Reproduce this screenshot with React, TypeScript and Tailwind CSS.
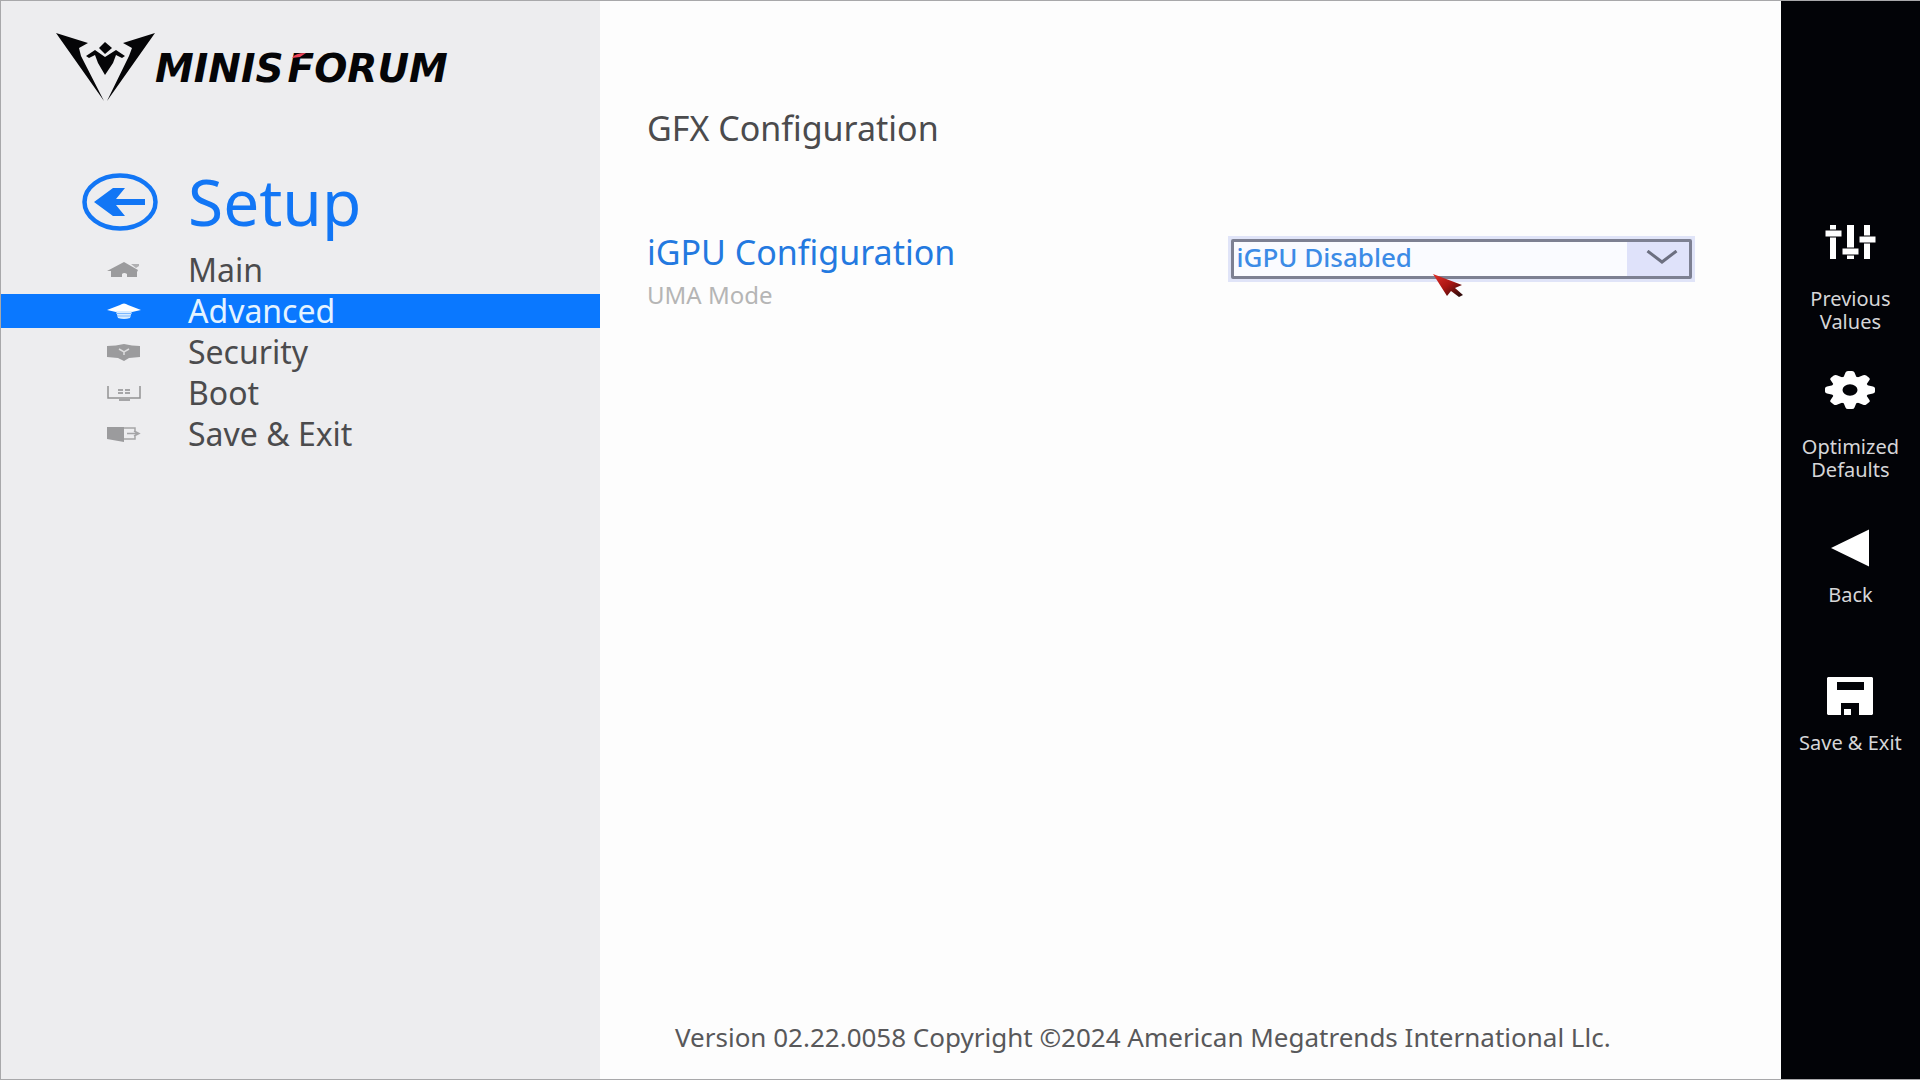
import React from "react";

function Emblem() {
  return (
    <svg viewBox="0 0 99 68" className="h-[68px] w-[99px] shrink-0" aria-hidden="true">
      <path d="M0 0 L32 10 L23 15 L25 23 L48 68 Z" fill="#050507" />
      <path d="M99 0 L67 10 L76 15 L73 23 L51 68 Z" fill="#050507" />
      <path d="M49 9 L56 15 L49 21 L43 15 Z" fill="#050507" />
      <path d="M30 23 L39 17 L49 24 L60 17 L69 23 L66 25 L60 22 L57 30 L49 42 L42 30 L39 22 L33 25 Z" fill="#050507" />
    </svg>
  );
}

function BackCircle() {
  return (
    <svg viewBox="0 0 76 58" className="h-[58px] w-[76px]" aria-hidden="true">
      <ellipse cx="38" cy="29" rx="35.5" ry="26.5" fill="none" stroke="#1276f5" strokeWidth="4.5" />
      <path d="M12 29 L31 15 H43 L34 26 H63 V32 H34 L43 43 H31 Z" fill="#1276f5" />
    </svg>
  );
}

function HomeIcon() {
  return (
    <svg viewBox="0 0 34 18" className="h-[18px] w-[34px]" aria-hidden="true">
      <path d="M0 10 L17 1 L31 9 L30 11 V16 H20 V13 Q17 11 15 13 V16 H4 V10 Z" fill="#9b9b9d" />
      <path d="M24 3 H32 V5 L29 7 Z" fill="#b0b0b2" />
    </svg>
  );
}

function CapIcon() {
  return (
    <svg viewBox="0 0 34 18" className="h-[18px] w-[34px]" aria-hidden="true">
      <path d="M0 8 L13 3 Q17 0 21 3 L34 8 L25 10 H9 Z" fill="#fff" />
      <path d="M9 9 H25 L23 16 Q17 18 11 16 Z" fill="#d8ecff" />
      <path d="M9 11.500 H25 M10 14 H24" stroke="#7cb8ff" strokeWidth="1" />
    </svg>
  );
}

function ShieldIcon() {
  return (
    <svg viewBox="0 0 34 18" className="h-[18px] w-[34px]" aria-hidden="true">
      <path d="M0 3 Q9 3 17 1 Q25 3 33 3 V14 L22 15 L17 18 L11 15 L0 14 Z" fill="#9b9b9d" />
      <path d="M12 6 L17 9 L22 6 M17 9 V12" fill="none" stroke="#dededf" strokeWidth="1.500" />
    </svg>
  );
}

function BootIcon() {
  return (
    <svg viewBox="0 0 34 18" className="h-[18px] w-[34px]" aria-hidden="true">
      <path d="M1 2 V14 H33 V2" fill="none" stroke="#929294" strokeWidth="1.500" />
      <path d="M11 6 H16 M18 6 H23 M11 9 H16 M18 9 H23" stroke="#a5a5a7" strokeWidth="2" />
      <path d="M12 16 H23" stroke="#a5a5a7" strokeWidth="2" />
    </svg>
  );
}

function ExitIcon() {
  return (
    <svg viewBox="0 0 34 18" className="h-[18px] w-[34px]" aria-hidden="true">
      <path d="M0 2 H17 V17 L0 14 Z" fill="#9b9b9d" />
      <path d="M17 3 H28 V6 M17 14 H28 V11 M20 8.500 H32 M27 6 L32 8.500 L27 11" fill="none" stroke="#a5a5a7" strokeWidth="1.500" />
    </svg>
  );
}

function SlidersIcon() {
  return (
    <svg viewBox="0 0 52 36" className="h-[36px] w-[52px]" aria-hidden="true">
      <path d="M6 1 H12 V35 H6 Z M23 1 H30 V35 H23 Z M40 1 H46 V35 H40 Z" fill="#fff" />
      <path d="M1 6 H18 V13 H1 Z M18 24 H35 V31 H18 Z M35 12 H52 V19 H35 Z" fill="#fff" stroke="#020307" strokeWidth="1" />
    </svg>
  );
}

function GearIcon() {
  const teeth = [0, 45, 90, 135, 180, 225, 270, 315];
  return (
    <svg viewBox="-25 -25 50 50" preserveAspectRatio="none" className="h-[38px] w-[50px]" aria-hidden="true">
      <circle r="18.500" fill="#fff" />
      {teeth.map((angle) => (
        <path key={angle} transform={`rotate(${angle})`} d="M-7 -15 L-4.500 -23 Q-4 -25 -2 -25 H2 Q4 -25 4.500 -23 L7 -15 Z" fill="#fff" />
      ))}
      <circle r="7.500" fill="#020307" />
    </svg>
  );
}

function TriangleIcon() {
  return (
    <svg viewBox="0 0 38 38" className="h-[38px] w-[38px]" aria-hidden="true">
      <path d="M0 19 L38 0.500 V37.500 Z" fill="#fff" />
    </svg>
  );
}

function FloppyIcon() {
  return (
    <svg viewBox="0 0 46 38" className="h-[38px] w-[46px]" aria-hidden="true">
      <path
        fillRule="evenodd"
        d="M1 0 H45 L46 1 V37 L45 38 H32 V26 H14 V38 H1 L0 37 V1 Z M10 5 V13 H37 V5 Z"
        fill="#fff"
      />
      <path d="M17 32 H24 V38 H17 Z" fill="#fff" />
    </svg>
  );
}

function Pointer() {
  return (
    <svg viewBox="0 0 30 24" className="h-[24px] w-[30px]" aria-hidden="true">
      <defs>
        <linearGradient id="pointer-fill" x1="0" y1="0" x2="1" y2="1">
          <stop offset="0" stopColor="#e0302a" />
          <stop offset="0.500" stopColor="#a81512" />
          <stop offset="1" stopColor="#1c0a0a" />
        </linearGradient>
      </defs>
      <path d="M0 0 L29 11 L22 14 L30 21 L26 23 L18 17 L14 22 Z" fill="url(#pointer-fill)" />
    </svg>
  );
}

const menu = [
  { label: "Main", Icon: HomeIcon, active: false },
  { label: "Advanced", Icon: CapIcon, active: true },
  { label: "Security", Icon: ShieldIcon, active: false },
  { label: "Boot", Icon: BootIcon, active: false },
  { label: "Save & Exit", Icon: ExitIcon, active: false },
];

const actions = [
  { label: "Previous Values", Icon: SlidersIcon, twoLines: true },
  { label: "Optimized Defaults", Icon: GearIcon, twoLines: true },
  { label: "Back", Icon: TriangleIcon, twoLines: false },
  { label: "Save & Exit", Icon: FloppyIcon, twoLines: false },
];

function Sidebar() {
  return (
    <aside className="w-[31.25%] shrink-0 border-l border-[#a8a8aa] bg-[#ededef]">
      <div className="flex h-[100px] items-end pl-[55px]">
        <Emblem />
        <div className="mb-[12px] flex gap-1 font-['DejaVu_Sans'] text-[39px] leading-[40px] font-bold text-[#050507] italic">
          <span>MINIS</span>
          <span className="relative">
            FORUM
            <svg viewBox="0 0 14 5" className="absolute top-1 left-1 h-[5px] w-[14px]" aria-hidden="true">
              <path d="M0 5 Q3 0 14 0 L8 4 Z" fill="#ee4458" />
            </svg>
          </span>
        </div>
      </div>
      <div className="mt-[68px] flex h-[66px] items-center pl-[81px]">
        <button type="button" aria-label="Go back" className="mr-[30px] shrink-0">
          <BackCircle />
        </button>
        <h1 className="text-[64px] leading-[64px] text-[#1276f5]">Setup</h1>
      </div>
      <nav className="mt-[18px] flex flex-col gap-[7px]">
        {menu.map(({ label, Icon, active }) => (
          <a
            key={label}
            href="#"
            aria-current={active ? "page" : undefined}
            className={
              active
                ? "flex h-[34px] items-center bg-[#0a78ff] pl-[106px] text-[32px] leading-[32px] text-[#e4f3ff]"
                : "flex h-[34px] items-center pl-[106px] text-[32px] leading-[32px] text-[#4b4b4d]"
            }
          >
            <span className="mr-[47px]">
              <Icon />
            </span>
            {label}
          </a>
        ))}
      </nav>
    </aside>
  );
}

function Content() {
  return (
    <main className="flex flex-1 flex-col bg-[#fdfdfd] pl-[47px]">
      <h2 className="mt-[107px] text-[34px] leading-[40px] text-[#4b4b4d]">GFX Configuration</h2>
      <div className="mt-[84px] flex items-start justify-between pr-[86px]">
        <label htmlFor="igpu" className="text-[34px] leading-[40px] text-[#2379e0]">
          iGPU Configuration
        </label>
        <div className="relative mt-[4px] w-[44.6%] bg-[#e0e4f8] p-[3px]">
          <select
            id="igpu"
            defaultValue="disabled"
            className="block h-[40px] w-full appearance-none rounded-[2px] border-[3px] border-[#7d8092] bg-[#fafbff] pb-1 pl-[3px] text-[26px] leading-[30px] font-medium text-[#3c8be6] outline-none"
          >
            <option value="disabled">iGPU Disabled</option>
          </select>
          <div className="pointer-events-none absolute top-[6px] right-[6px] flex h-[34px] w-[62px] items-center justify-center bg-[#dfe2fa] pb-1 pl-2">
            <svg viewBox="0 0 32 14" className="h-[14px] w-[32px]" aria-hidden="true">
              <path d="M1.500 1 L16 12 L30.500 1" fill="none" stroke="#6c6f80" strokeWidth="3" />
            </svg>
          </div>
          <div className="pointer-events-none absolute top-[38px] left-[44%]">
            <Pointer />
          </div>
        </div>
      </div>
      <p className="mt-[-2px] text-[24px] leading-[30px] text-[#b5b5b5]">UMA Mode</p>
      <footer className="mt-auto mb-[26px] pl-7 text-[26px] leading-[32px] text-[#58585a]">
        Version 02.22.0058 Copyright ©2024 American Megatrends International Llc.
      </footer>
    </main>
  );
}

function ActionBar() {
  return (
    <aside className="flex w-[7.25%] shrink-0 flex-col bg-[#020307] pt-[221px]">
      {actions.map(({ label, Icon, twoLines }) => (
        <button
          key={label}
          type="button"
          className="flex h-[148px] flex-col items-center text-[20px] leading-[23px] text-[#d6d6d8]"
        >
          <span className={twoLines ? "mb-[25px] flex h-[40px] items-center" : "mt-[10px] mb-[15px] flex h-[40px] items-center"}>
            <Icon />
          </span>
          <span className="w-[124px] text-center">{label}</span>
        </button>
      ))}
    </aside>
  );
}

export default function App() {
  return (
    <div className="flex min-h-screen border-y border-[#a8a8aa] bg-[#020307] font-['Noto_Sans','Open_Sans',sans-serif]">
      <Sidebar />
      <Content />
      <ActionBar />
    </div>
  );
}
